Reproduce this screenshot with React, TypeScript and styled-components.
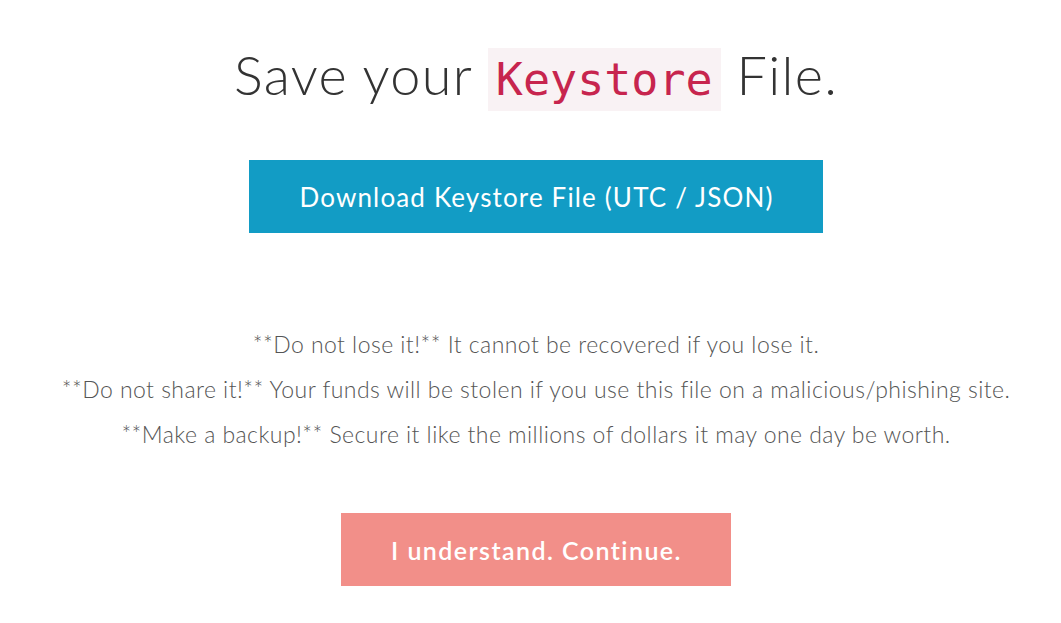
import React from "react";
import styled, { createGlobalStyle } from "styled-components";

const Global = createGlobalStyle`
  html, body { margin: 0; padding: 0; background: #fff; }
  body { font-family: Lato, "Open Sans", sans-serif; }
`;

const Page = styled.main`
  display: flex;
  flex-direction: column;
  align-items: center;
  padding: 36px 0 0 11px;
  box-sizing: border-box;
  width: 1061px;
`;

const Title = styled.h1`
  margin: 0 0 41px;
  font-family: Lato, sans-serif;
  font-weight: 300;
  font-size: 54px;
  line-height: 78px;
  letter-spacing: 1.3px;
  color: #333;
`;

const Code = styled.code`
  font-family: "DejaVu Sans Mono", monospace;
  font-size: 45px;
  letter-spacing: 0;
  color: #c7254e;
  background: #f9f2f4;
  padding: 5px 8px;
`;

const Button = styled.button<{ $tone: "blue" | "red" }>`
  border: 0;
  cursor: pointer;
  font-family: Lato, sans-serif;
  font-size: ${(p) => (p.$tone === "blue" ? "26px" : "25px")};
  font-weight: ${(p) => (p.$tone === "blue" ? 400 : 600)};
  letter-spacing: ${(p) => (p.$tone === "blue" ? "1.15px" : "1.43px")};
  color: #fff;
  background: ${(p) => (p.$tone === "blue" ? "#129cc5" : "#f28f89")};
  height: 73px;
  padding: 0 49px 0 50px;
`;

const Notes = styled.div`
  display: flex;
  flex-direction: column;
  align-items: center;
  margin: 89px 0 56px;
`;

const Note = styled.p`
  margin: 0;
  font-family: Lato, sans-serif;
  font-weight: 300;
  font-size: 23px;
  line-height: 45px;
  letter-spacing: 0.45px;
  color: #555;
`;

export default function App() {
  return (
    <>
      <Global />
      <Page>
        <Title>
          Save your <Code>Keystore</Code> File.
        </Title>
        <Button $tone="blue">Download Keystore File (UTC / JSON)</Button>
        <Notes>
          <Note>**Do not lose it!** It cannot be recovered if you lose it.</Note>
          <Note>
            **Do not share it!** Your funds will be stolen if you use this file on a
            malicious/phishing site.
          </Note>
          <Note>
            **Make a backup!** Secure it like the millions of dollars it may one day be
            worth.
          </Note>
        </Notes>
        <Button $tone="red">I understand. Continue.</Button>
      </Page>
    </>
  );
}
